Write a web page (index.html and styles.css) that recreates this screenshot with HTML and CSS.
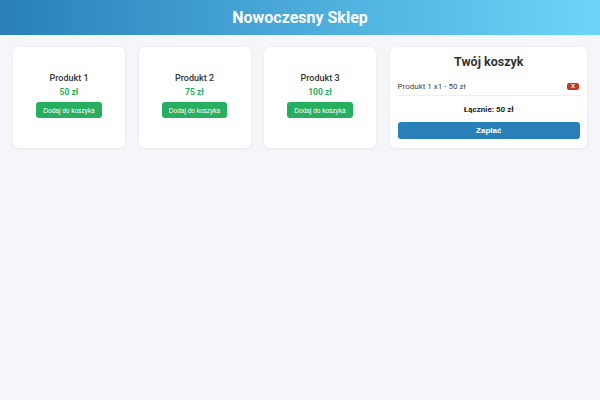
FILE: index.html
```html
<!DOCTYPE html>
<html lang="pl">
<head>
<meta charset="utf-8">
<link rel="stylesheet" href="styles.css">
</head>
<body>
<header class="top">
  <h1 class="top-title">Nowoczesny Sklep</h1>
</header>
<main class="shop">
  <div class="product">
    <div class="product-name">Produkt 1</div>
    <div class="product-price">50 zł</div>
    <button class="add-btn">Dodaj do koszyka</button>
  </div>
  <div class="product">
    <div class="product-name">Produkt 2</div>
    <div class="product-price">75 zł</div>
    <button class="add-btn">Dodaj do koszyka</button>
  </div>
  <div class="product">
    <div class="product-name">Produkt 3</div>
    <div class="product-price">100 zł</div>
    <button class="add-btn">Dodaj do koszyka</button>
  </div>
  <aside class="cart">
    <h2 class="cart-title">Twój koszyk</h2>
    <div class="cart-item">
      <span>Produkt 1 x1 - 50 zł</span>
      <button class="remove-btn">X</button>
    </div>
    <div class="cart-total">Łącznie: 50 zł</div>
    <button class="pay-btn">Zapłać</button>
  </aside>
</main>
</body>
</html>
```

FILE: styles.css
```css
* { box-sizing: border-box; }
html, body { margin: 0; padding: 0; }
body {
  background: #f4f6f9;
  font-family: Roboto, "Liberation Sans", sans-serif;
  color: #333;
  width: 600px;
  height: 400px;
}
.top {
  height: 35px;
  background: linear-gradient(90deg, #2980b9, #6dd5fa);
  display: flex;
  align-items: center;
  justify-content: center;
}
.top-title {
  margin: 0;
  color: #fff;
  font-size: 16px;
  font-weight: 700;
}
.shop {
  display: flex;
  gap: 13.5px;
  padding: 12px 13px;
  align-items: stretch;
}
.product {
  width: 112px;
  background: #fff;
  border-radius: 6px;
  box-shadow: 0 1px 4px rgba(0,0,0,0.05);
  display: flex;
  flex-direction: column;
  align-items: center;
  justify-content: center;
  padding-bottom: 4px;
}
.product-name {
  font-size: 9px;
  font-weight: 500;
  color: #333;
}
.product-price {
  margin-top: 4px;
  font-size: 8.5px;
  font-weight: 700;
  color: #27ae60;
}
.add-btn {
  margin-top: 5px;
  border: none;
  background: #27ae60;
  color: #fff;
  font-family: "Liberation Sans", Arial, sans-serif;
  font-size: 6.5px;
  padding: 0 7px;
  height: 16px;
  border-radius: 3px;
}
.cart {
  flex: 1;
  background: #fff;
  border-radius: 6px;
  box-shadow: 0 1px 4px rgba(0,0,0,0.05);
  padding: 7px 7px 9px 8px;
  display: flex;
  flex-direction: column;
}
.cart-title {
  margin: 0;
  text-align: center;
  font-size: 12.5px;
  font-weight: 700;
  color: #333;
  line-height: 16px;
}
.cart-item {
  margin-top: 12px;
  display: flex;
  justify-content: space-between;
  align-items: center;
  font-size: 8px;
  color: #444;
  padding-bottom: 4px;
  border-bottom: 1px solid #eee;
}
.remove-btn {
  border: none;
  background: #c0392b;
  color: #fff;
  font-size: 6px;
  font-weight: 700;
  width: 12px;
  height: 7px;
  padding: 0;
  line-height: 7px;
  border-radius: 2px;
  margin-right: 1px;
}
.cart-total {
  margin-top: 9px;
  text-align: center;
  font-size: 8px;
  font-weight: 700;
  color: #222;
}
.pay-btn {
  margin-top: 8px;
  border: none;
  background: #2980b9;
  color: #fff;
  font-family: "Liberation Sans", Arial, sans-serif;
  font-weight: 700;
  font-size: 8px;
  height: 17px;
  border-radius: 3px;
}
```
